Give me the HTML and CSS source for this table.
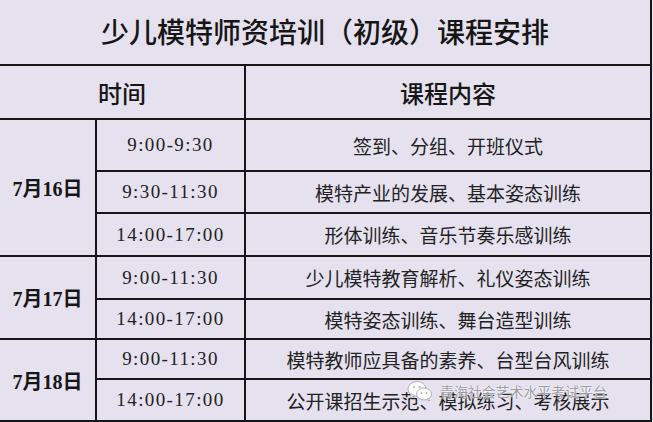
FILE: index.html
```html
<!DOCTYPE html>
<html lang="zh-CN">
<head>
<meta charset="utf-8">
<title>少儿模特师资培训（初级）课程安排</title>
<link rel="stylesheet" href="styles.css">
</head>
<body>
<div class="sheet">
  <div class="cell title">少儿模特师资培训（初级）课程安排</div>
  <div class="cell head head-time">时间</div>
  <div class="cell head">课程内容</div>

  <div class="cell date d1">7月16日</div>
  <div class="cell time">9:00-9:30</div>
  <div class="cell content">签到、分组、开班仪式</div>
  <div class="cell time">9:30-11:30</div>
  <div class="cell content">模特产业的发展、基本姿态训练</div>
  <div class="cell time">14:00-17:00</div>
  <div class="cell content">形体训练、音乐节奏乐感训练</div>

  <div class="cell date d2">7月17日</div>
  <div class="cell time">9:00-11:30</div>
  <div class="cell content">少儿模特教育解析、礼仪姿态训练</div>
  <div class="cell time">14:00-17:00</div>
  <div class="cell content">模特姿态训练、舞台造型训练</div>

  <div class="cell date d3">7月18日</div>
  <div class="cell time">9:00-11:30</div>
  <div class="cell content">模特教师应具备的素养、台型台风训练</div>
  <div class="cell time">14:00-17:00</div>
  <div class="cell content">公开课招生示范、模拟练习、考核展示</div>

  <div class="watermark">
    <svg class="wm-icon" width="26" height="22" viewBox="0 0 26 22">
      <ellipse cx="10" cy="9" rx="9" ry="7.5" fill="#fff" stroke="#b0b0ba" stroke-width="1"/>
      <path d="M4 14 L3 18 L7.5 15.5 Z" fill="#fff" stroke="#b0b0ba" stroke-width="1"/>
      <ellipse cx="17" cy="14" rx="7.5" ry="6" fill="#fff" stroke="#b0b0ba" stroke-width="1"/>
      <path d="M21 18.5 L23 21 L19.5 19.5 Z" fill="#fff" stroke="#b0b0ba" stroke-width="1"/>
      <circle cx="7" cy="7" r="1.1" fill="#b0b0ba"/>
      <circle cx="12.5" cy="7" r="1.1" fill="#b0b0ba"/>
      <circle cx="14.5" cy="13" r="0.9" fill="#b0b0ba"/>
      <circle cx="19.5" cy="13" r="0.9" fill="#b0b0ba"/>
    </svg>
    <span class="wm-text">青海社会艺术水平考试平台</span>
  </div>
</div>
</body>
</html>
```

FILE: styles.css
```css
html, body {
  margin: 0;
  padding: 0;
  background: #e5e1ee;
}

body {
  width: 653px;
  height: 422px;
  overflow: hidden;
  color: #1c1c1c;
  font-family: "Noto Sans CJK SC", sans-serif;
}

.sheet {
  position: relative;
  width: 652px;
  display: grid;
  grid-template-columns: 97px 149px 406px;
  grid-template-rows: 66px 54px 52px 42px 43px 43px 40px 40px 42px;
  background: #e5e1ee;
}

.cell {
  box-sizing: border-box;
  border-right: 2px solid #161616;
  border-bottom: 2px solid #161616;
  display: flex;
  align-items: center;
  justify-content: center;
  white-space: nowrap;
}

.title {
  grid-column: 1 / 4;
  font-size: 28px;
  font-weight: 500;
  padding-bottom: 2px;
  color: #161616;
}

.head {
  font-size: 24px;
  font-weight: 500;
  color: #161616;
}

.head-time {
  grid-column: 1 / 3;
}

.date {
  grid-column: 1;
  font-family: "Liberation Serif", "Noto Sans CJK SC", serif;
  font-size: 20px;
  font-weight: 700;
  color: #161616;
}

.d1 { grid-row: 3 / 6; }
.d2 { grid-row: 6 / 8; }
.d3 { grid-row: 8 / 10; }

.time {
  grid-column: 2;
  font-family: "Liberation Serif", serif;
  font-size: 19px;
  letter-spacing: 1.4px;
  color: #222;
}

.content {
  grid-column: 3;
  font-size: 19px;
  color: #222;
}

.watermark {
  position: absolute;
  left: 407px;
  top: 380px;
  display: flex;
  align-items: center;
  gap: 7px;
}

.wm-text {
  font-size: 14px;
  color: #9c9ca6;
  letter-spacing: -0.1px;
  text-shadow: 0 0 2px #fff, 0 0 1px #fff;
}
```
